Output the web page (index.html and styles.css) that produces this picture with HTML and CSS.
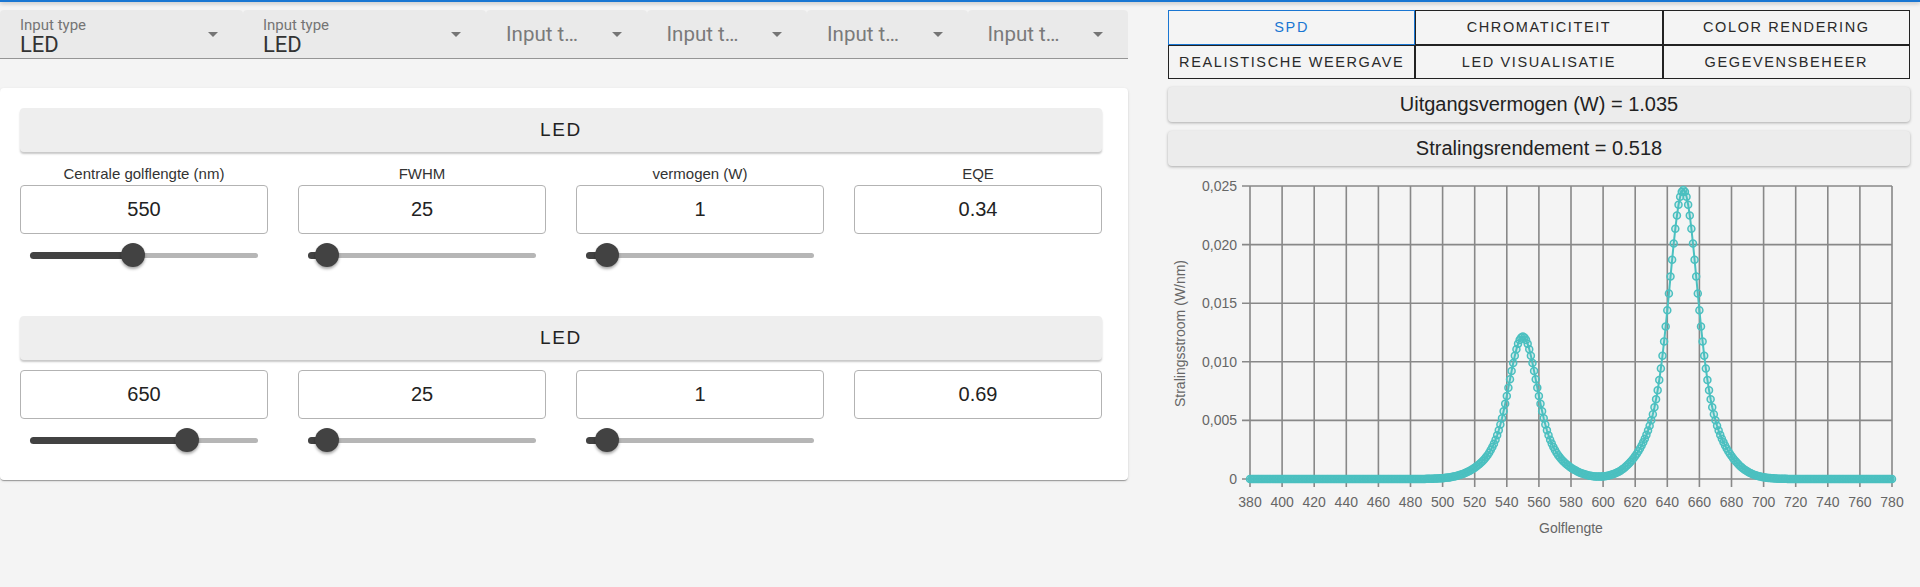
FILE: index.html
```html
<!DOCTYPE html>
<html lang="nl">
<head>
<meta charset="utf-8">
<title>LED SPD</title>
<link rel="stylesheet" href="styles.css">
</head>
<body>
<div class="appbar"></div>
<main class="layout">
  <section class="left">
    <div class="selects">
      <div class="sel wide">
        <div class="sel-text"><span class="sel-label">Input type</span><span class="sel-value">LED</span></div>
        <span class="caret"></span>
      </div>
      <div class="sel wide">
        <div class="sel-text"><span class="sel-label">Input type</span><span class="sel-value">LED</span></div>
        <span class="caret"></span>
      </div>
      <div class="sel narrow"><span class="sel-placeholder">Input t…</span><span class="caret"></span></div>
      <div class="sel narrow"><span class="sel-placeholder">Input t…</span><span class="caret"></span></div>
      <div class="sel narrow"><span class="sel-placeholder">Input t…</span><span class="caret"></span></div>
      <div class="sel narrow"><span class="sel-placeholder">Input t…</span><span class="caret"></span></div>
    </div>

    <div class="card">
      <div class="block">
        <div class="block-head">LED</div>
        <div class="fields">
          <div class="field">
            <div class="field-label">Centrale golflengte (nm)</div>
            <div class="field-input">550</div>
            <div class="slider"><div class="rail"></div><div class="track" style="width:45.2%"></div><div class="thumb" style="left:45.2%"></div></div>
          </div>
          <div class="field">
            <div class="field-label">FWHM</div>
            <div class="field-input">25</div>
            <div class="slider"><div class="rail"></div><div class="track" style="width:8.4%"></div><div class="thumb" style="left:8.4%"></div></div>
          </div>
          <div class="field">
            <div class="field-label">vermogen (W)</div>
            <div class="field-input">1</div>
            <div class="slider"><div class="rail"></div><div class="track" style="width:9.4%"></div><div class="thumb" style="left:9.4%"></div></div>
          </div>
          <div class="field">
            <div class="field-label">EQE</div>
            <div class="field-input">0.34</div>
          </div>
        </div>
      </div>

      <div class="block">
        <div class="block-head">LED</div>
        <div class="fields">
          <div class="field">
            <div class="field-input">650</div>
            <div class="slider"><div class="rail"></div><div class="track" style="width:69%"></div><div class="thumb" style="left:69%"></div></div>
          </div>
          <div class="field">
            <div class="field-input">25</div>
            <div class="slider"><div class="rail"></div><div class="track" style="width:8.4%"></div><div class="thumb" style="left:8.4%"></div></div>
          </div>
          <div class="field">
            <div class="field-input">1</div>
            <div class="slider"><div class="rail"></div><div class="track" style="width:9.4%"></div><div class="thumb" style="left:9.4%"></div></div>
          </div>
          <div class="field">
            <div class="field-input">0.69</div>
          </div>
        </div>
      </div>
    </div>
  </section>

  <section class="right">
    <div class="tabs">
      <div class="tab active">SPD</div>
      <div class="tab">CHROMATICITEIT</div>
      <div class="tab">COLOR RENDERING</div>
      <div class="tab">REALISTISCHE WEERGAVE</div>
      <div class="tab">LED VISUALISATIE</div>
      <div class="tab">GEGEVENSBEHEER</div>
    </div>
    <div class="stat">Uitgangsvermogen (W) = 1.035</div>
    <div class="stat second">Stralingsrendement = 0.518</div>

    <svg class="chart" viewBox="0 0 742 400" width="742" height="400">
      <path class="grid" d="M82 14V315M114.1 14V315M146.2 14V315M178.3 14V315M210.4 14V315M242.5 14V315M274.6 14V315M306.7 14V315M338.8 14V315M370.9 14V315M403 14V315M435.1 14V315M467.2 14V315M499.3 14V315M531.4 14V315M563.5 14V315M595.6 14V315M627.7 14V315M659.8 14V315M691.9 14V315M724 14V315M74 14H724M74 72.6H724M74 131.2H724M74 189.8H724M74 248.4H724M74 307H724"/>
      <g class="ticks-y">
        <text x="69" y="19">0,025</text>
        <text x="69" y="77.6">0,020</text>
        <text x="69" y="136.2">0,015</text>
        <text x="69" y="194.8">0,010</text>
        <text x="69" y="253.4">0,005</text>
        <text x="69" y="312">0</text>
      </g>
      <g class="ticks-x">
        <text x="82" y="335">380</text>
        <text x="114.1" y="335">400</text>
        <text x="146.2" y="335">420</text>
        <text x="178.3" y="335">440</text>
        <text x="210.4" y="335">460</text>
        <text x="242.5" y="335">480</text>
        <text x="274.6" y="335">500</text>
        <text x="306.7" y="335">520</text>
        <text x="338.8" y="335">540</text>
        <text x="370.9" y="335">560</text>
        <text x="403" y="335">580</text>
        <text x="435.1" y="335">600</text>
        <text x="467.2" y="335">620</text>
        <text x="499.3" y="335">640</text>
        <text x="531.4" y="335">660</text>
        <text x="563.5" y="335">680</text>
        <text x="595.6" y="335">700</text>
        <text x="627.7" y="335">720</text>
        <text x="659.8" y="335">740</text>
        <text x="691.9" y="335">760</text>
        <text x="724" y="335">780</text>
      </g>
      <text class="axis-title" x="403" y="361">Golflengte</text>
      <text class="axis-title" transform="translate(17 161.5) rotate(-90)">Stralingsstroom (W/nm)</text>
      <g id="series"></g>
    </svg>
  </section>
</main>
<script src="script.js"></script>
</body>
</html>
```

FILE: styles.css
```css
html, body {
  margin: 0;
  height: 100%;
  overflow: hidden;
  background: #f4f4f4;
}

body {
  font-family: "Liberation Sans", Arial, sans-serif;
  color: #222;
}

.appbar {
  height: 2px;
  background: #1976d2;
  box-shadow: 0 1px 4px rgba(0, 0, 0, 0.35);
  position: relative;
  z-index: 1;
}

.layout {
  display: flex;
  gap: 40px;
  padding: 8px 10px 0 0;
}

.left {
  flex: 0 0 1128px;
}

.right {
  flex: 0 0 742px;
}

/* select row */
.selects {
  display: flex;
  height: 49px;
}

.sel {
  display: flex;
  align-items: center;
  box-sizing: border-box;
  background: #eaeaea;
  border-bottom: 1px solid #959595;
  border-radius: 4px 4px 0 0;
  padding-left: 20px;
  font-family: Roboto, "Liberation Sans", sans-serif;
  min-width: 0;
}

.sel.wide {
  flex: 0 0 243px;
}

.sel.narrow {
  flex: 1 1 0;
}

.sel-text {
  flex: 1;
  align-self: flex-start;
  display: flex;
  flex-direction: column;
  padding-top: 8px;
}

.sel-label {
  font-size: 15px;
  line-height: 15px;
  color: #757575;
}

.sel-value {
  font-size: 22px;
  line-height: 22px;
  margin-top: 1px;
  color: #333;
}

.sel-placeholder {
  flex: 1;
  font-size: 20.5px;
  line-height: 20px;
  color: #7a7a7a;
  white-space: nowrap;
}

.caret {
  flex: none;
  width: 0;
  height: 0;
  border-left: 5px solid transparent;
  border-right: 5px solid transparent;
  border-top: 5px solid #757575;
  margin-right: 25px;
}

/* card */
.card {
  margin-top: 29px;
  background: #fff;
  border-radius: 4px;
  box-shadow: 0 2px 1px -1px rgba(0, 0, 0, 0.2), 0 1px 1px rgba(0, 0, 0, 0.14), 0 1px 3px rgba(0, 0, 0, 0.12);
  padding: 20px 26px 19px 20px;
  display: flex;
  flex-direction: column;
  gap: 40px;
}

.block-head {
  height: 44px;
  display: flex;
  align-items: center;
  justify-content: center;
  background: #eeeeee;
  border-radius: 4px;
  box-shadow: 0 2px 2px rgba(0, 0, 0, 0.22);
  font-size: 19px;
  letter-spacing: 1.6px;
  color: #222;
  margin-bottom: 10px;
}

.fields {
  display: grid;
  grid-template-columns: repeat(4, 1fr);
  gap: 30px;
}

.field-label {
  text-align: center;
  font-size: 15px;
  line-height: 17px;
  margin: 3px 0;
  color: #333;
}

.field-input {
  height: 49px;
  box-sizing: border-box;
  border: 1px solid #b3b3b3;
  border-radius: 4px;
  display: flex;
  align-items: center;
  justify-content: center;
  font-size: 20px;
  color: #222;
  background: #fff;
}

.slider {
  position: relative;
  height: 42px;
  margin: 0 10px;
  display: flex;
  align-items: center;
}

.rail {
  flex: 1;
  height: 5px;
  border-radius: 3px;
  background: #b6b6b6;
}

.track {
  position: absolute;
  left: 0;
  top: 17.5px;
  height: 7px;
  border-radius: 4px;
  background: #424242;
}

.thumb {
  position: absolute;
  top: 9px;
  width: 24px;
  height: 24px;
  margin-left: -12px;
  border-radius: 50%;
  background: #424242;
  box-shadow: 0 2px 3px rgba(0, 0, 0, 0.35);
}

/* right side */
.tabs {
  display: grid;
  grid-template-columns: repeat(3, 1fr);
}

.tab {
  height: 34.5px;
  box-sizing: border-box;
  border: 1px solid #222;
  display: flex;
  align-items: center;
  justify-content: center;
  font-size: 14.5px;
  letter-spacing: 1.6px;
  color: #2a2a2a;
  white-space: nowrap;
}

.tab.active {
  border-color: #1976d2;
  color: #1976d2;
}

.stat {
  height: 35px;
  margin-top: 8px;
  background: #ececec;
  border-radius: 4px;
  box-shadow: 0 1px 3px rgba(0, 0, 0, 0.3);
  display: flex;
  align-items: center;
  justify-content: center;
  font-size: 20px;
  color: #222;
}

.stat.second {
  margin-top: 9px;
}

.chart {
  display: block;
  margin-top: 6px;
}

.grid {
  fill: none;
  stroke: #888;
  stroke-width: 1.6;
}

.ticks-y text,
.ticks-x text,
.axis-title {
  font-family: "Liberation Sans", Arial, sans-serif;
  font-size: 14px;
  fill: #666;
}

.ticks-y text {
  text-anchor: end;
}

.ticks-x text,
.axis-title {
  text-anchor: middle;
}

.series-line {
  fill: none;
  stroke: #4bc0c0;
  stroke-width: 2;
}

.series-pt {
  fill: rgba(75, 192, 192, 0.2);
  stroke: #4bc0c0;
  stroke-width: 1.5;
}
```

FILE: script.js
```js
(function () {
  var ns = 'http://www.w3.org/2000/svg';
  var group = document.getElementById('series');

  function led(l, l0, w) {
    var g = Math.exp(-Math.pow((l - l0) / w, 2));
    return (g + 2 * Math.pow(g, 5)) / 3;
  }

  var norm = 0;
  for (var t = 200; t <= 900; t += 0.1) {
    norm += led(t, 550, 25) * 0.1;
  }

  var pts = [];
  for (var l = 380; l <= 780; l++) {
    var v = (0.34 * led(l, 550, 25) + 0.69 * led(l, 650, 25)) / norm;
    pts.push([82 + (l - 380) * 1.605, 307 - (v / 0.025) * 293]);
  }

  var line = document.createElementNS(ns, 'polyline');
  line.setAttribute('class', 'series-line');
  line.setAttribute('points', pts.map(function (p) {
    return p[0].toFixed(2) + ',' + p[1].toFixed(2);
  }).join(' '));
  group.appendChild(line);

  pts.forEach(function (p) {
    var c = document.createElementNS(ns, 'circle');
    c.setAttribute('class', 'series-pt');
    c.setAttribute('cx', p[0].toFixed(2));
    c.setAttribute('cy', p[1].toFixed(2));
    c.setAttribute('r', '3.5');
    group.appendChild(c);
  });
})();
```
